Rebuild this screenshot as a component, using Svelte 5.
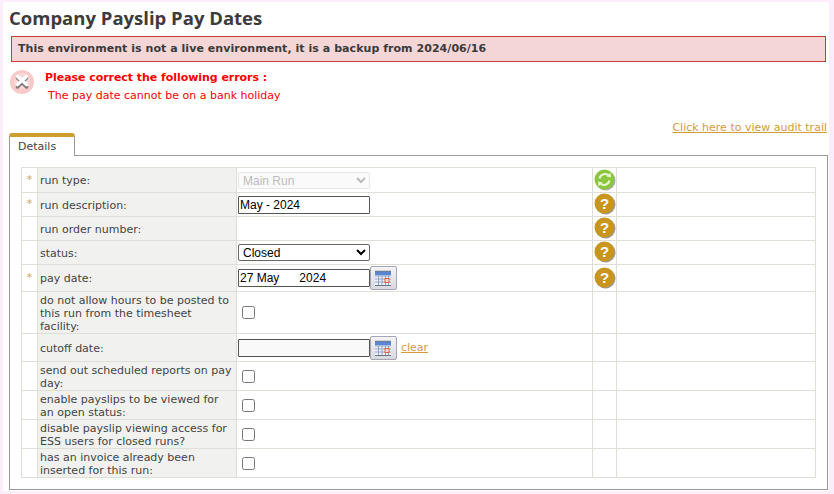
<script>
    const rows = [
        { req: true, label: 'run type:', kind: 'type', help: 'refresh', h: 25 },
        { req: true, label: 'run description:', kind: 'text', help: 'q', h: 24 },
        { req: false, label: 'run order number:', kind: 'none', help: 'q', h: 24 },
        { req: false, label: 'status:', kind: 'status', help: 'q', h: 24 },
        { req: true, label: 'pay date:', kind: 'date', help: 'q', h: 27 },
        { req: false, label: 'do not allow hours to be posted to this run from the timesheet facility:', kind: 'check', h: 42 },
        { req: false, label: 'cutoff date:', kind: 'cutoff', h: 28 },
        { req: false, label: 'send out scheduled reports on pay day:', kind: 'check', h: 29 },
        { req: false, label: 'enable payslips to be viewed for an open status:', kind: 'check', h: 29 },
        { req: false, label: 'disable payslip viewing access for ESS users for closed runs?', kind: 'check', h: 29 },
        { req: false, label: 'has an invoice already been inserted for this run:', kind: 'check', h: 29 }
    ]
</script>

{#snippet calendar()}
    <button class="calBtn" type="button" aria-label="calendar">
        <svg width="18" height="18" viewBox="0 0 18 18">
            <rect x="1" y="2" width="16" height="15" fill="#c9d5ee" />
            <rect x="1" y="2" width="16" height="4" fill="#5b86d0" />
            <path d="M2 1.500V3M4 1.500V3M6 1.500V3M8 1.500V3M10 1.500V3M12 1.500V3M14 1.500V3M16 1.500V3" stroke="#777" stroke-width="1" />
            <path d="M1 7H17V16H1Z" fill="#eef2fa" />
            <path d="M1 7H17M1 10H17M1 13H17M4.500 7V17M8 7V17M11.500 7V17M14.500 7V17" stroke="#8fa3c8" stroke-width="1" />
            <rect x="11" y="9.500" width="4" height="4" fill="#f6d9d2" stroke="#e2603a" stroke-width="1" />
            <path d="M1 16.500H17" stroke="#6a7485" stroke-width="1" />
        </svg>
    </button>
{/snippet}

<div class="page">
    <h1>Company Payslip Pay Dates</h1>
    <div class="envBanner">This environment is not a live environment, it is a backup from 2024/06/16</div>

    <div class="errors">
        <svg class="errIcon" width="26" height="26" viewBox="0 0 26 26">
            <circle cx="13" cy="13" r="12" fill="#f9caca" />
            <circle cx="13" cy="12" r="8" fill="#fbd8d8" />
            <path d="M8.500 9L17.500 18" stroke="#666" stroke-width="3.500" stroke-linecap="round" opacity="0.8" />
            <path d="M17.500 9L8.500 18" stroke="#666" stroke-width="3.500" stroke-linecap="round" opacity="0.8" />
            <path d="M8.500 7.500L17.500 15.500M17.500 7.500L8.500 15.500" stroke="#fff" stroke-width="3.500" stroke-linecap="round" />
        </svg>
        <div>
            <p class="errTitle">Please correct the following errors :</p>
            <p class="errLine">The pay date cannot be on a bank holiday</p>
        </div>
    </div>

    <div class="auditRow"><a href="#audit">Click here to view audit trail</a></div>

    <div class="tabs"><span class="tab">Details</span></div>

    <div class="tabBody">
        <table>
            <colgroup>
                <col style="width: 16px" />
                <col style="width: 199px" />
                <col style="width: 356px" />
                <col style="width: 24px" />
                <col />
            </colgroup>
            <tbody>
                {#each rows as row}
                    <tr style="height: {row.h}px">
                        <td class="star">{row.req ? '*' : ''}</td>
                        <td class="label">{row.label}</td>
                        <td class="field">
                            {#if row.kind === 'type'}
                                <select class="selectBox" disabled><option>Main Run</option></select>
                            {:else if row.kind === 'text'}
                                <input class="textBox" type="text" value="May - 2024" />
                            {:else if row.kind === 'status'}
                                <select class="selectBox"><option>Closed</option></select>
                            {:else if row.kind === 'date'}
                                <div class="dateWrap">
                                    <input class="textBox" type="text" value="27 May      2024" />
                                    {@render calendar()}
                                </div>
                            {:else if row.kind === 'cutoff'}
                                <div class="dateWrap">
                                    <input class="textBox cutoff" type="text" />
                                    {@render calendar()}
                                    <a class="clear" href="#clear">clear</a>
                                </div>
                            {:else if row.kind === 'check'}
                                <input class="check" type="checkbox" />
                            {/if}
                        </td>
                        <td class="help">
                            {#if row.help === 'refresh'}
                                <svg width="22" height="22" viewBox="0 0 22 22">
                                    <circle cx="11.500" cy="11.500" r="10" fill="#666" opacity="0.55" />
                                    <circle cx="10.500" cy="10.500" r="10" fill="#8cc63f" />
                                    <path d="M5.500 9.500A5.500 5.500 0 0 1 15 7" fill="none" stroke="#e8f6d6" stroke-width="2" />
                                    <path d="M12.500 7.500L17 8.500L16.500 3.500Z" fill="#e8f6d6" />
                                    <path d="M15.500 11.500A5.500 5.500 0 0 1 6 14" fill="none" stroke="#e8f6d6" stroke-width="2" />
                                    <path d="M8.500 13.500L4 12.500L4.500 17.500Z" fill="#e8f6d6" />
                                </svg>
                            {:else if row.help === 'q'}
                                <svg width="22" height="22" viewBox="0 0 22 22">
                                    <circle cx="11.500" cy="11.500" r="10" fill="#555" opacity="0.6" />
                                    <circle cx="10.500" cy="10.500" r="10" fill="#c8951f" />
                                    <text x="10.500" y="16" text-anchor="middle" class="qMark">?</text>
                                </svg>
                            {/if}
                        </td>
                        <td></td>
                    </tr>
                {/each}
            </tbody>
        </table>
    </div>
</div>

<style>
    :global(body) {
        margin: 0;
        background-color: #fcedfa;
    }

    .page {
        box-sizing: border-box;
        width: 826px;
        height: 489px;
        margin: 2px 0 0 3px;
        padding: 6px 6px 0 6px;
        background-color: #fff;
        font-family: "DejaVu Sans", Verdana, sans-serif;
        font-size: 11px;
        color: #444;
    }

    h1 {
        margin: 0;
        font-family: "Open Sans", "Liberation Sans", sans-serif;
        font-size: 18.5px;
        line-height: 22px;
        font-weight: 700;
        color: #3c3c3c;
        position: relative;
        top: -1px;
    }

    .envBanner {
        box-sizing: border-box;
        height: 26px;
        margin: 6px 0 0 2px;
        width: 815px;
        padding-left: 6px;
        line-height: 24px;
        font-weight: 700;
        letter-spacing: 0.05px;
        color: #3a3a3a;
        background-color: #f4d6d6;
        border: 1px solid #c43c3c;
    }

    .errors {
        display: flex;
        gap: 10px;
        margin: 8px 0 0 0;
        height: 50px;
    }

    .errors p {
        margin: 0;
    }

    .errTitle {
        margin-top: 1px !important;
        font-weight: 700;
        letter-spacing: -0.05px;
        color: #f00;
        line-height: 14px;
    }

    .errIcon {
        margin-top: -1px;
    }

    .errLine {
        margin: 4px 0 0 3px !important;
        color: #f00;
        line-height: 14px;
    }

    .auditRow {
        height: 13px;
        text-align: right;
        width: 818px;
        line-height: 15px;
    }

    a {
        color: #d59b3a;
    }

    .tabs {
        height: 22px;
    }

    .tab {
        display: inline-block;
        box-sizing: border-box;
        width: 66px;
        height: 23px;
        padding-left: 8px;
        line-height: 20px;
        color: #444;
        background-color: #fff;
        border: 1px solid #999;
        border-top: 4px solid #cf9f2d;
        border-bottom: none;
        border-radius: 3px 3px 0 0;
        position: relative;
        z-index: 1;
    }

    .tabBody {
        box-sizing: border-box;
        width: 819px;
        height: 335px;
        padding: 11px 11px 0 11px;
        border: 1px solid #999;
    }

    table {
        width: 795px;
        table-layout: fixed;
        border-collapse: collapse;
    }

    td {
        padding: 0;
        border: 1px solid #dfdfd8;
    }

    .star {
        padding-bottom: 2px;
        text-align: center;
        color: #cf9f5a;
        background-color: #fff;
    }

    .label {
        padding: 1px 3px 0 2px;
        line-height: 13px;
        background-color: #f1f1ef;
        color: #444;
    }

    .field {
        padding-left: 1px;
    }

    .selectBox {
        display: block;
        box-sizing: border-box;
        width: 132px;
        height: 17px;
        padding: 0;
        font-family: "Liberation Sans", Arial, sans-serif;
        font-size: 12px;
        color: #000;
        background-color: #fff;
        border: 1px solid #666;
        border-radius: 2px;
    }

    .selectBox:disabled {
        color: #a0a0a0;
        background-color: #f8f8f8;
        border-color: #ddd;
    }

    .textBox {
        box-sizing: border-box;
        width: 132px;
        height: 18px;
        padding: 0 1px;
        font-family: "Liberation Sans", Arial, sans-serif;
        font-size: 12px;
        color: #000;
        border: 1px solid #555;
        border-radius: 1px;
    }

    .cutoff {
        background-color: #f9f9f9;
    }

    .dateWrap {
        display: flex;
        align-items: center;
    }

    .calBtn {
        box-sizing: border-box;
        width: 27px;
        height: 24px;
        padding: 0 0 0 3px;
        display: flex;
        align-items: center;
        background: linear-gradient(#f4f4f6, #d8d8e0);
        border: 1px solid #a5a5b5;
        border-radius: 2px;
    }

    .clear {
        margin-left: 4px;
    }

    .check {
        display: block;
        width: 13px;
        height: 13px;
        margin: 0 0 0 4px;
    }

    .help {
        padding-bottom: 1px;
        text-align: center;
        vertical-align: middle;
        line-height: 0;
    }

    .help svg {
        display: inline-block;
    }

    .qMark {
        font-family: "Liberation Sans", Arial, sans-serif;
        font-size: 15px;
        font-weight: 700;
        fill: #fff;
    }
</style>
